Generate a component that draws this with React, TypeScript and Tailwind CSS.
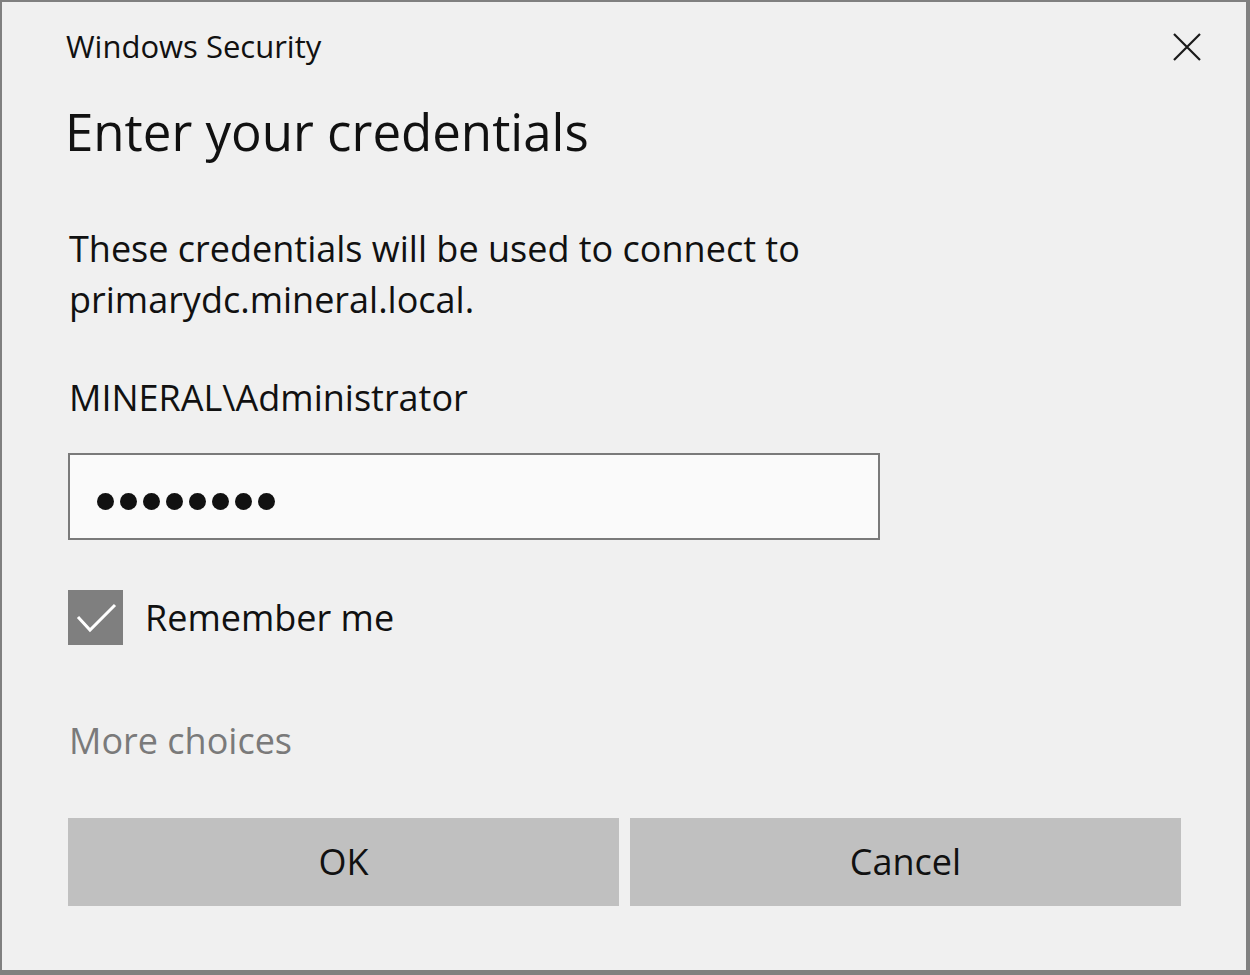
import React from "react";

export default function App() {
  return (
    <div
      className="w-[1250px] h-[975px] bg-[#f0f0f0] border-t-2 border-l-2 border-r-4 border-b-[5px] border-[#808080] relative text-[#000]"
      style={{ fontFamily: '"Open Sans", "Noto Sans", sans-serif' }}
    >
      <button className="absolute left-[1168px] top-[28px] w-[34px] h-[34px] flex items-center justify-center">
        <svg width="28" height="28" viewBox="0 0 28 28">
          <path d="M1 1 L27 27 M27 1 L1 27" stroke="#1a1a1a" strokeWidth="2.2" fill="none" />
        </svg>
      </button>
      <div className="flex flex-col pl-[62px] pr-[56px]">
        <div className="mt-[23px] ml-[2px] h-[42px] leading-[42px] text-[31px] text-[#111]">Windows Security</div>
        <div className="mt-[34px] ml-[1px] h-[60px] leading-[60px] text-[51px] text-[#111]">Enter your credentials</div>
        <div className="mt-[62px] ml-[5px] text-[36px] leading-[51px] text-[#111]">
          These credentials will be used to connect to
          <br />
          primarydc.mineral.local.
        </div>
        <div className="mt-[47px] ml-[5px] text-[36px] leading-[51px] text-[#111]">MINERAL\Administrator</div>
        <div className="mt-[30px] ml-[4px] w-[812px] h-[87px] border-2 border-[#7a7a7a] bg-[#fafafa] flex items-center pl-[27px] pt-[10px] gap-[6px]">
          {Array.from({ length: 8 }).map((_, i) => (
            <span key={i} className="block w-[17px] h-[17px] rounded-full bg-[#111]" />
          ))}
        </div>
        <div className="mt-[50px] ml-[4px] flex items-center">
          <div className="w-[55px] h-[55px] bg-[#7f7f7f] flex items-center justify-center">
            <svg width="44" height="34" viewBox="0 0 44 34">
              <path d="M4 16 L16 29 L41 4" stroke="#fff" strokeWidth="3" fill="none" />
            </svg>
          </div>
          <span className="ml-[22px] text-[36px] leading-[51px] text-[#111]">Remember me</span>
        </div>
        <div className="mt-[70px] ml-[5px] text-[36px] leading-[51px] text-[#7a7a7a]">More choices</div>
        <div className="mt-[52px] ml-[4px] flex gap-[11px]">
          <button className="w-[551px] h-[88px] shrink-0 bg-[#c0c0c0] text-[36px] text-[#111]">OK</button>
          <button className="w-[551px] h-[88px] shrink-0 bg-[#c0c0c0] text-[36px] text-[#111]">Cancel</button>
        </div>
      </div>
    </div>
  );
}
